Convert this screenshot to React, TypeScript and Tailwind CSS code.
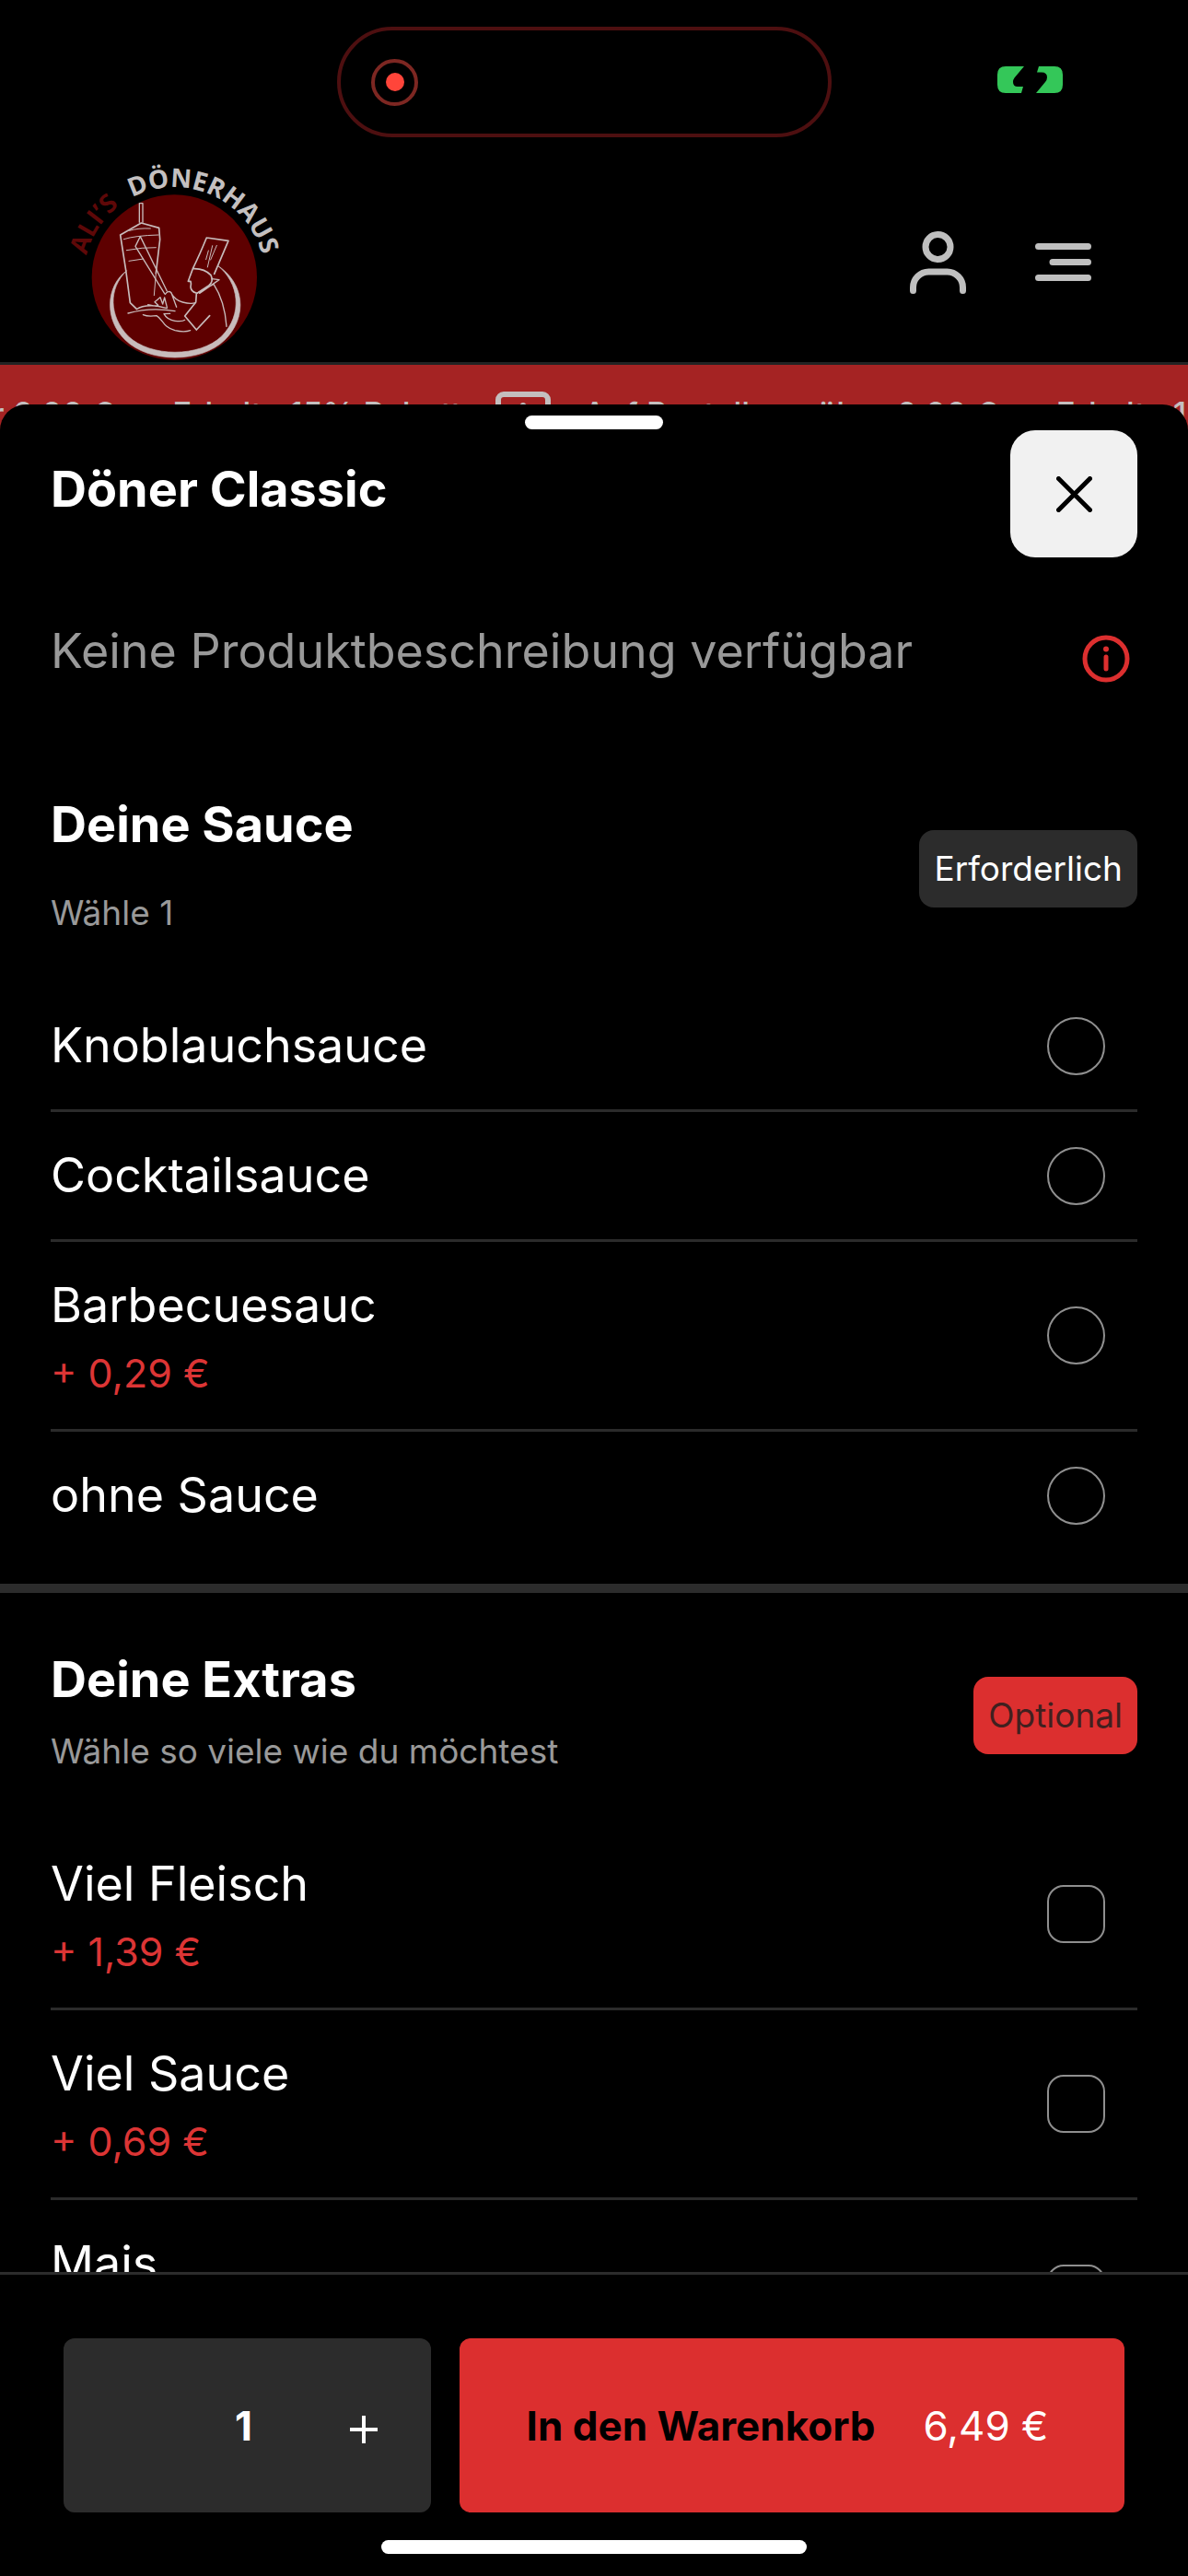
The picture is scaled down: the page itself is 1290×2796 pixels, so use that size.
import { useState } from "react";

type Option = {
  id: string;
  name: string;
  price?: string;
};

const sauces: Option[] = [
  { id: "knoblauch", name: "Knoblauchsauce" },
  { id: "cocktail", name: "Cocktailsauce" },
  { id: "barbecue", name: "Barbecuesauc", price: "+ 0,29 €" },
  { id: "ohne", name: "ohne Sauce" },
];

const extras: Option[] = [
  { id: "fleisch", name: "Viel Fleisch", price: "+ 1,39 €" },
  { id: "sauce", name: "Viel Sauce", price: "+ 0,69 €" },
  { id: "mais", name: "Mais", price: "+ 0,69 €" },
];

function StatusBar() {
  return (
    <div className="flex h-40 pt-[29px]">
      <div className="w-[366px]" />
      <div className="flex h-[120px] flex-1 items-center rounded-full border-4 border-[#4d0f10] pl-[33px]">
        <div className="flex size-[51px] items-center justify-center rounded-full border-4 border-[#7d2722]">
          <div className="size-5 rounded-full bg-[#ff453a]" />
        </div>
      </div>
      <div className="flex h-[115px] w-[387px] items-center pl-[180px]">
        <svg width="71" height="29" viewBox="0 0 71 29" fill="#34c759">
          <path d="M9 0H29L18.500 12.500Q17 14.500 17 17Q17 22 22 22H28L26 29H9Q0 29 0 20V9Q0 0 9 0Z" />
          <path d="M45 0H62Q71 0 71 9V20Q71 29 62 29H42L52 17Q54 14.500 54 12Q54 6.500 48 6.500H43Z" />
        </svg>
      </div>
    </div>
  );
}

function Logo() {
  return (
    <svg
      width="300"
      height="233"
      viewBox="0 0 900 699"
      fill="none"
      stroke="#c8bcbc"
      strokeWidth="5"
      strokeLinecap="round"
      strokeLinejoin="round"
      role="img"
      aria-label="Ali's Dönerhaus"
    >
      <circle cx="448" cy="423" r="269" fill="#5e0000" stroke="none" />
      <path id="logo-arc" d="M162 352A295 295 0 0 1 743 423" stroke="none" />
      <g fontFamily="'Open Sans', 'Noto Sans', sans-serif" fontWeight="700" fontSize="84" stroke="none">
        <text fill="#5e0808">
          <textPath href="#logo-arc">ALI’S</textPath>
        </text>
        <text fill="#c4c0c0">
          <textPath href="#logo-arc" startOffset="247">
            DÖNERHAUS
          </textPath>
        </text>
      </g>

      {/* plate ring */}
      <path
        d="M292 402C225 450 218 560 288 627C365 703 535 703 612 627C690 550 675 440 588 384C660 440 672 545 602 615C530 684 370 684 298 615C235 550 232 460 292 402Z"
        fill="#c8bcbc"
        strokeWidth="2"
      />

      {/* skewer */}
      <path d="M334 244V182H345V244" strokeWidth="4" />
      <path d="M272 285L340 246L398 262L401 300L388 410M272 285L290 400L304 506L325 526" />
      <path
        d="M283 299Q320 287 396 285M302 271Q330 262 370 264M292 335Q345 325 388 326M300 370L347 363M388 410L382 482"
        strokeWidth="3"
      />
      <path d="M337 290L321 322L416 476M337 290L424 468" strokeWidth="4" />

      {/* plate and hands */}
      <path d="M297 540Q370 519 450 533M325 527Q345 512 390 516L424 524M388 517L362 512M395 514L384 503L402 488L410 510M410 510L416 489L424 520M418 478Q428 464 438 473L455 520M438 475Q450 497 475 504T517 506" strokeWidth="4" />
      <path d="M346 545Q362 552 390 548C412 560 410 585 450 596Q480 603 500 596M414 542Q425 562 450 565T482 562M414 542L434 541" strokeWidth="4" />

      {/* chef */}
      <path d="M553 294L624 304L578 412M553 294Q530 350 508 395L493 436H501Q504 446 501 454Q502 470 520 474M508 395Q545 393 567 416Q577 437 560 450L520 476L518 504L482 549L520 594L563 548" />
      <path d="M570 428L594 431M594 431L530 475M520 476L576 445Q612 500 618 583" strokeWidth="4" />
      <path d="M559 336L551 365M572 320L556 390M586 319L566 366" strokeWidth="3" />
    </svg>
  );
}

function NavBar() {
  return (
    <nav className="flex h-[236px] items-center justify-between border-b-3 border-[#232323] pr-[105px] pl-10">
      <a href="#" aria-label="Startseite">
        <Logo />
      </a>
      <div className="flex items-center gap-[75px] pt-4">
        <button type="button" aria-label="Konto">
          <svg width="61" height="68" viewBox="0 0 61 68" fill="none" stroke="#bfbfbf" strokeWidth="7" strokeLinecap="round">
            <circle cx="30.500" cy="17" r="13.500" />
            <path d="M3.500 64.500V61A17 17 0 0 1 20.500 44H40.500A17 17 0 0 1 57.500 61V64.500" />
          </svg>
        </button>
        <button type="button" aria-label="Menü">
          <svg width="61" height="41" viewBox="0 0 61 41" fill="none" stroke="#bfbfbf" strokeWidth="7" strokeLinecap="round">
            <path d="M3.500 3.500H57.500M19 20.500H57.500M3.500 37.500H57.500" />
          </svg>
        </button>
      </div>
    </nav>
  );
}

function BannerText() {
  return (
    <p className="flex gap-16">
      <span>Auf Bestellung über 0,00 €</span>
      <span>Erhalte 15% Rabatt</span>
    </p>
  );
}

function Banner() {
  return (
    <div className="h-[120px] shrink-0 overflow-hidden bg-[#a52323]">
      <div className="-ml-[326px] flex items-start pt-[29px] text-[35px] leading-[48px] font-medium whitespace-nowrap text-[#c4bfbf]">
        <BannerText />
        <svg className="mx-9 shrink-0" width="60" height="60" viewBox="0 0 60 60" fill="none" stroke="currentColor" strokeWidth="6" strokeLinecap="round" strokeLinejoin="round">
          <rect x="3" y="3" width="54" height="54" rx="6" />
          <path d="M20 23L30 15L40 23M30 15V45" />
        </svg>
        <BannerText />
      </div>
    </div>
  );
}

function OptionRow({ option, type, group }: { option: Option; type: "radio" | "checkbox"; group: string }) {
  return (
    <li className="border-b-3 border-[#2b2b2b] last:border-b-0">
      <label
        className={
          option.price
            ? "flex h-[203px] items-center justify-between pr-[35px]"
            : "flex h-[138px] items-center justify-between pr-[35px]"
        }
      >
        <span className="flex flex-col">
          <span className="text-[52px] leading-[80px]">{option.name}</span>
          {option.price && (
            <span className="text-[43px] leading-[66px] text-[#dc3535]">{option.price}</span>
          )}
        </span>
        <input
          type={type}
          name={group}
          value={option.id}
          className={
            type === "radio"
              ? "size-[63px] appearance-none rounded-full border-2 border-[#8f8f8f] checked:bg-[#dc2f2f]"
              : "size-[63px] appearance-none rounded-[18px] border-2 border-[#8f8f8f] checked:bg-[#dc2f2f]"
          }
        />
      </label>
    </li>
  );
}

export default function App() {
  const [count, setCount] = useState<number>(1);

  return (
    <div className="flex h-screen flex-col overflow-hidden bg-black font-['Inter','Liberation_Sans',sans-serif] text-white">
      <header className="shrink-0">
        <StatusBar />
        <NavBar />
      </header>
      <Banner />

      <main className="relative -mt-[77px] flex min-h-0 flex-1 flex-col rounded-t-[28px] bg-black pt-3">
        <div className="mx-auto h-[15px] w-[150px] shrink-0 rounded-full bg-white" />

        <div className="flex shrink-0 items-center justify-between px-[55px] pt-px">
          <h1 className="pb-2.5 text-[54px] leading-[80px] font-bold">Döner Classic</h1>
          <button
            type="button"
            aria-label="Schließen"
            className="flex size-[138px] items-center justify-center rounded-[27px] bg-[#f1f1f1]"
          >
            <svg width="39" height="39" viewBox="0 0 39 39" stroke="#000" strokeWidth="5" strokeLinecap="round">
              <path d="M2.500 2.500L36.500 36.500M36.500 2.500L2.500 36.500" />
            </svg>
          </button>
        </div>

        <div className="min-h-0 flex-1 overflow-y-auto [scrollbar-width:none]">
          <div className="flex items-center justify-between px-[55px] pt-[62px] pb-[55px]">
            <p className="text-[52px] leading-[80px] text-[#999]">Keine Produktbeschreibung verfügbar</p>
            <button type="button" aria-label="Produktinformationen" className="mr-2 pt-4">
              <svg width="52" height="52" viewBox="0 0 52 52" fill="none" stroke="#dc2f2f" strokeWidth="5" strokeLinecap="round">
                <circle cx="26" cy="26" r="23" />
                <path d="M26 24V37" />
                <circle cx="26" cy="15.500" r="3" fill="#dc2f2f" stroke="none" />
              </svg>
            </button>
          </div>

          <section className="border-b-10 border-[#2c2c2c] px-[55px] pt-[54px] pb-[27px]">
            <div className="flex items-center justify-between">
              <div>
                <h2 className="text-[54px] leading-[78px] font-bold">Deine Sauce</h2>
                <p className="mt-[18px] text-[37px] leading-[78px] text-[#999]">Wähle 1</p>
              </div>
              <span className="rounded-2xl bg-[#2c2c2c] px-4 text-[37px] leading-[84px]">Erforderlich</span>
            </div>
            <ul className="mt-9">
              {sauces.map((option) => (
                <OptionRow key={option.id} option={option} type="radio" group="sauce" />
              ))}
            </ul>
          </section>

          <section className="px-[55px] pt-[55px]">
            <div className="flex items-center justify-between">
              <div>
                <h2 className="text-[54px] leading-[78px] font-bold">Deine Extras</h2>
                <p className="text-[37px] leading-[78px] text-[#999]">Wähle so viele wie du möchtest</p>
              </div>
              <span className="rounded-2xl bg-[#dc2f2f] px-4 text-[37px] leading-[84px] text-[#40201f]">Optional</span>
            </div>
            <ul className="mt-9">
              {extras.map((option) => (
                <OptionRow key={option.id} option={option} type="checkbox" group="extras" />
              ))}
            </ul>
          </section>
        </div>

        <footer className="shrink-0 border-t-3 border-[#2c2c2c] px-[69px] pt-[69px] pb-6">
          <div className="flex gap-[31px]">
            <div className="grid h-[189px] w-[399px] grid-cols-3 items-center rounded-xl bg-[#2c2c2c] pr-2">
              <button
                type="button"
                aria-label="Weniger"
                className="h-full disabled:opacity-0"
                disabled={count <= 1}
                onClick={() => setCount(count - 1)}
              />
              <span className="text-center text-[44px] font-bold">{count}</span>
              <button
                type="button"
                aria-label="Mehr"
                className="flex h-full items-center justify-center pt-2"
                onClick={() => setCount(count + 1)}
              >
                <svg width="30" height="30" viewBox="0 0 30 30" stroke="#fff" strokeWidth="4">
                  <path d="M15 0V30M0 15H30" />
                </svg>
              </button>
            </div>
            <button
              type="button"
              className="flex h-[189px] flex-1 items-center justify-center gap-[52px] rounded-xl bg-[#dc2f2f] pr-2.5 text-[44px]"
            >
              <span className="font-bold text-black">In den Warenkorb</span>
              <span>6,49 €</span>
            </button>
          </div>
          <div className="mx-auto mt-[30px] h-[15px] w-[462px] rounded-full bg-white" />
        </footer>
      </main>
    </div>
  );
}
